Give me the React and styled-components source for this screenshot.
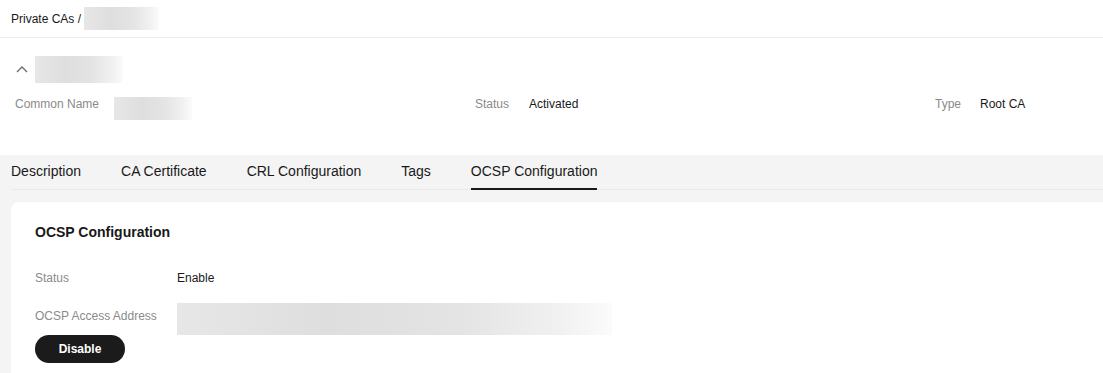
import React from 'react';
import styled, { createGlobalStyle } from 'styled-components';

const GlobalStyle = createGlobalStyle`
  html, body {
    margin: 0;
    padding: 0;
    background: #ffffff;
  }
  body {
    font-family: "Liberation Sans", Arial, sans-serif;
    color: #191919;
    overflow: hidden;
  }
`;

const Page = styled.div`
  display: flex;
  flex-direction: column;
  min-height: 373px;
`;

const Breadcrumb = styled.div`
  display: flex;
  align-items: center;
  height: 37px;
  padding-left: 11px;
  border-bottom: 1px solid #ececec;
  font-size: 12px;
  gap: 3px;
`;

const Redacted = styled.div`
  width: ${(p) => p.$w}px;
  height: ${(p) => p.$h}px;
  flex-shrink: 0;
  background: linear-gradient(
    90deg,
    #e7e7e7 0%,
    #dedede 35%,
    #e4e4e4 65%,
    #f1f1f1 88%,
    #fbfbfb 100%
  );
`;

const Summary = styled.div`
  display: flex;
  flex-direction: column;
  padding: 18px 15px 35px 15px;
  gap: 14px;
`;

const TitleRow = styled.div`
  display: flex;
  align-items: center;
  gap: 6px;
  height: 27px;
`;

const Chevron = styled.svg`
  width: 14px;
  height: 14px;
`;

const InfoGrid = styled.div`
  display: grid;
  grid-template-columns: 460px 460px 1fr;
  align-items: start;
  height: 23px;
`;

const InfoItem = styled.div`
  display: flex;
  align-items: flex-start;
  gap: ${(p) => p.$gap}px;
  font-size: 12px;
  line-height: 14px;
`;

const Label = styled.span`
  color: #8a8a8a;
  font-size: 12px;
`;

const Value = styled.span`
  color: #191919;
  font-size: 12px;
`;

const Content = styled.div`
  flex: 1;
  background: #f4f4f4;
  display: flex;
  flex-direction: column;
  padding-left: 11px;
`;

const Tabs = styled.div`
  display: flex;
  gap: 40px;
  height: 34px;
  border-bottom: 1px solid #e8e8e8;
`;

const Tab = styled.div`
  position: relative;
  display: flex;
  align-items: center;
  font-size: 14px;
  color: #191919;
  padding-bottom: 2px;

  &::after {
    content: '';
    display: ${(p) => (p.$active ? 'block' : 'none')};
    position: absolute;
    left: 0;
    right: 0;
    bottom: -1px;
    height: 2px;
    background: #191919;
  }
`;

const Card = styled.div`
  margin-top: 12px;
  flex: 1;
  background: #ffffff;
  border-radius: 8px 0 0 0;
  padding: 20px 24px 10px 24px;
  display: flex;
  flex-direction: column;
`;

const CardTitle = styled.div`
  font-size: 14px;
  font-weight: bold;
  line-height: 20px;
  margin-bottom: 23px;
`;

const FieldRow = styled.div`
  display: flex;
  align-items: flex-start;
  min-height: 24px;
  margin-bottom: ${(p) => p.$mb || 0}px;
`;

const FieldLabel = styled.div`
  width: 142px;
  flex-shrink: 0;
  padding-top: 4px;
  line-height: 18px;
  font-size: 12px;
  color: #8a8a8a;
`;

const FieldValue = styled.div`
  padding-top: 4px;
  line-height: 18px;
  font-size: 12px;
  color: #191919;
`;

const Button = styled.button`
  align-self: flex-start;
  width: 90px;
  height: 28px;
  border: none;
  border-radius: 14px;
  background: #1b1b1b;
  color: #ffffff;
  font-family: "Liberation Sans", Arial, sans-serif;
  font-size: 12px;
  font-weight: bold;
  cursor: pointer;
`;

const tabs = ['Description', 'CA Certificate', 'CRL Configuration', 'Tags', 'OCSP Configuration'];

const App = () => (
  <Page>
    <GlobalStyle />
    <Breadcrumb>
      <span>Private CAs /</span>
      <Redacted $w={75} $h={23} />
    </Breadcrumb>
    <Summary>
      <TitleRow>
        <Chevron viewBox="0 0 14 14">
          <polyline points="2,9 7,4 12,9" fill="none" stroke="#6b6b6b" strokeWidth="1.3" />
        </Chevron>
        <Redacted $w={88} $h={27} />
      </TitleRow>
      <InfoGrid>
        <InfoItem $gap={15}>
          <Label>Common Name</Label>
          <Redacted $w={78} $h={23} />
        </InfoItem>
        <InfoItem $gap={20}>
          <Label>Status</Label>
          <Value>Activated</Value>
        </InfoItem>
        <InfoItem $gap={19}>
          <Label>Type</Label>
          <Value>Root CA</Value>
        </InfoItem>
      </InfoGrid>
    </Summary>
    <Content>
      <Tabs>
        {tabs.map((t) => (
          <Tab key={t} $active={t === 'OCSP Configuration'}>
            {t}
          </Tab>
        ))}
      </Tabs>
      <Card>
        <CardTitle>OCSP Configuration</CardTitle>
        <FieldRow $mb={14}>
          <FieldLabel>Status</FieldLabel>
          <FieldValue>Enable</FieldValue>
        </FieldRow>
        <FieldRow>
          <FieldLabel>OCSP Access Address</FieldLabel>
          <Redacted $w={435} $h={32} />
        </FieldRow>
        <Button>Disable</Button>
      </Card>
    </Content>
  </Page>
);

export default App;
